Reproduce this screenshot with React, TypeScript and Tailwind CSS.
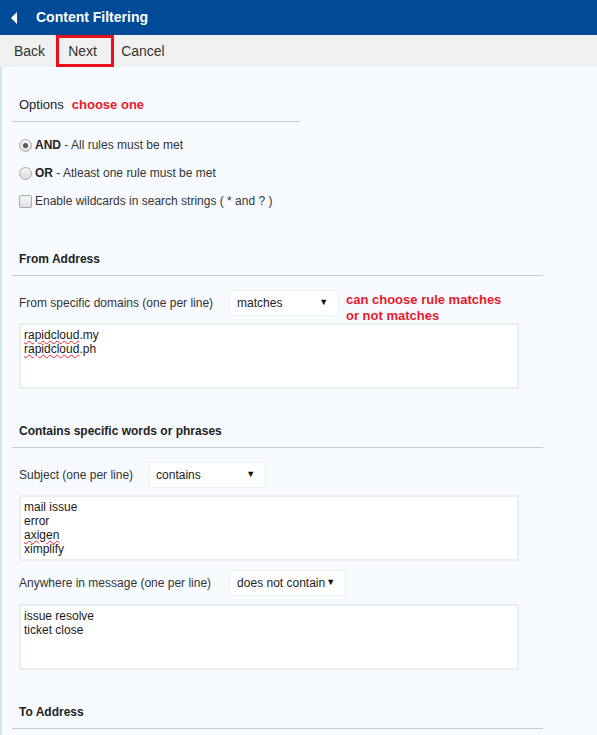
import React from "react";

const font = { fontFamily: '"Liberation Sans", Arial, sans-serif' };

function Radio({ checked }: { checked?: boolean }) {
  return (
    <span className="relative inline-flex h-[13px] w-[13px] items-center justify-center rounded-full border border-[#a9a9a9] bg-gradient-to-b from-[#f4f4f4] to-[#dcdcdc]">
      {checked && <span className="h-[5px] w-[5px] rounded-full bg-[#555]" />}
    </span>
  );
}

function Select({ value, width }: { value: string; width: string }) {
  return (
    <div className={`flex h-[26px] ${width} items-center justify-between border border-[#f0f0f0] bg-white pl-[7px] pr-[10px] text-[12px] text-[#222]`}>
      <span>{value}</span>
      <span className="text-[9px] text-[#111]">▼</span>
    </div>
  );
}

function Area({ lines }: { lines: React.ReactNode[] }) {
  return (
    <div className="h-[66px] w-[500px] border-2 border-[#ececec] bg-white px-[3px] pt-[3px] text-[12px] leading-[14px] text-[#1a1a1a]">
      {lines.map((l, i) => (
        <div key={i}>{l}</div>
      ))}
    </div>
  );
}

const Squiggle = ({ children }: { children: React.ReactNode }) => (
  <span className="underline decoration-wavy decoration-[#e23] decoration-1 underline-offset-1">{children}</span>
);

function Heading({ children, mt, width }: { children: React.ReactNode; mt: string; width: string }) {
  return (
    <div className={`${mt} ${width} border-b border-[#c9cccf] pb-[8px] pl-[7px] text-[12px] font-bold leading-[16px] text-[#222]`}>
      {children}
    </div>
  );
}

export default function App() {
  return (
    <div style={font} className="flex min-h-[735px] w-[597px] flex-col bg-[#f7fbff]">
      <div className="flex h-[35px] items-center bg-[#004a98]">
        <svg width="6" height="12" viewBox="0 0 6 12" className="ml-[11px]">
          <path d="M6 0 L0 6 L6 12 Z" fill="white" />
        </svg>
        <span className="ml-[19px] text-[14px] font-bold text-white">Content Filtering</span>
      </div>
      <div className="flex h-[32px] items-stretch bg-[#f0f0f0] text-[14px] text-[#333]">
        <span className="ml-[14px] flex items-center pt-[1px]">Back</span>
        <span className="ml-[11px] flex w-[58px] items-center border-[3px] border-[#e8101c] pl-[9px] pt-[1px]">Next</span>
        <span className="ml-[7px] flex items-center pt-[1px]">Cancel</span>
      </div>
      <div className="relative flex flex-1 flex-col border-l-2 border-[#cfe5f8] pb-[10px] pl-[10px]">
        <div className="mt-[30px] flex w-[288px] items-baseline border-b border-[#c9cccf] pb-[8px] pl-[7px] leading-[16px]">
          <span className="text-[13px] text-[#222]">Options</span>
          <span className="ml-[8px] text-[13px] font-bold text-[#e8192c]">choose one</span>
        </div>
        <div className="mt-[9px] pl-[7px] text-[12px] text-[#333]">
          <div className="flex h-[28px] items-center gap-[3px]">
            <Radio checked />
            <span>
              <b className="text-[#222]">AND</b> - All rules must be met
            </span>
          </div>
          <div className="flex h-[28px] items-center gap-[3px]">
            <Radio />
            <span>
              <b className="text-[#222]">OR</b> - Atleast one rule must be met
            </span>
          </div>
          <div className="flex h-[28px] items-center gap-[3px]">
            <span className="h-[13px] w-[13px] rounded-[2px] border border-[#a9a9a9] bg-gradient-to-b from-[#f6f6f6] to-[#e0e0e0]" />
            <span>Enable wildcards in search strings ( * and ? )</span>
          </div>
        </div>

        <Heading mt="mt-[36px]" width="w-[531px]">From Address</Heading>
        <div className="relative mt-[14px] flex items-center pl-[7px] text-[12px] text-[#333]">
          <span>From specific domains (one per line)</span>
          <div className="ml-[16px]">
            <Select value="matches" width="w-[110px]" />
          </div>
          <div className="absolute left-[334px] top-[2px] text-[13px] font-bold leading-[16px] text-[#e8192c]">
            can choose rule matches
            <br />
            or not matches
          </div>
        </div>
        <div className="mt-[7px] pl-[7px]">
          <Area lines={[<><Squiggle>rapidcloud</Squiggle>.my</>, <><Squiggle>rapidcloud</Squiggle>.ph</>]} />
        </div>

        <Heading mt="mt-[34px]" width="w-[531px]">Contains specific words or phrases</Heading>
        <div className="mt-[14px] flex items-center pl-[7px] text-[12px] text-[#333]">
          <span>Subject (one per line)</span>
          <div className="ml-[15px]">
            <Select value="contains" width="w-[118px]" />
          </div>
        </div>
        <div className="mt-[7px] pl-[7px]">
          <Area lines={["mail issue", "error", <Squiggle>axigen</Squiggle>, "ximplify"]} />
        </div>
        <div className="mt-[9px] flex items-center pl-[7px] text-[12px] text-[#333]">
          <span>Anywhere in message (one per line)</span>
          <div className="ml-[18px]">
            <Select value="does not contain" width="w-[117px]" />
          </div>
        </div>
        <div className="mt-[8px] pl-[7px]">
          <Area lines={["issue resolve", "ticket close"]} />
        </div>

        <Heading mt="mt-[34px]" width="w-[531px]">To Address</Heading>
      </div>
    </div>
  );
}
